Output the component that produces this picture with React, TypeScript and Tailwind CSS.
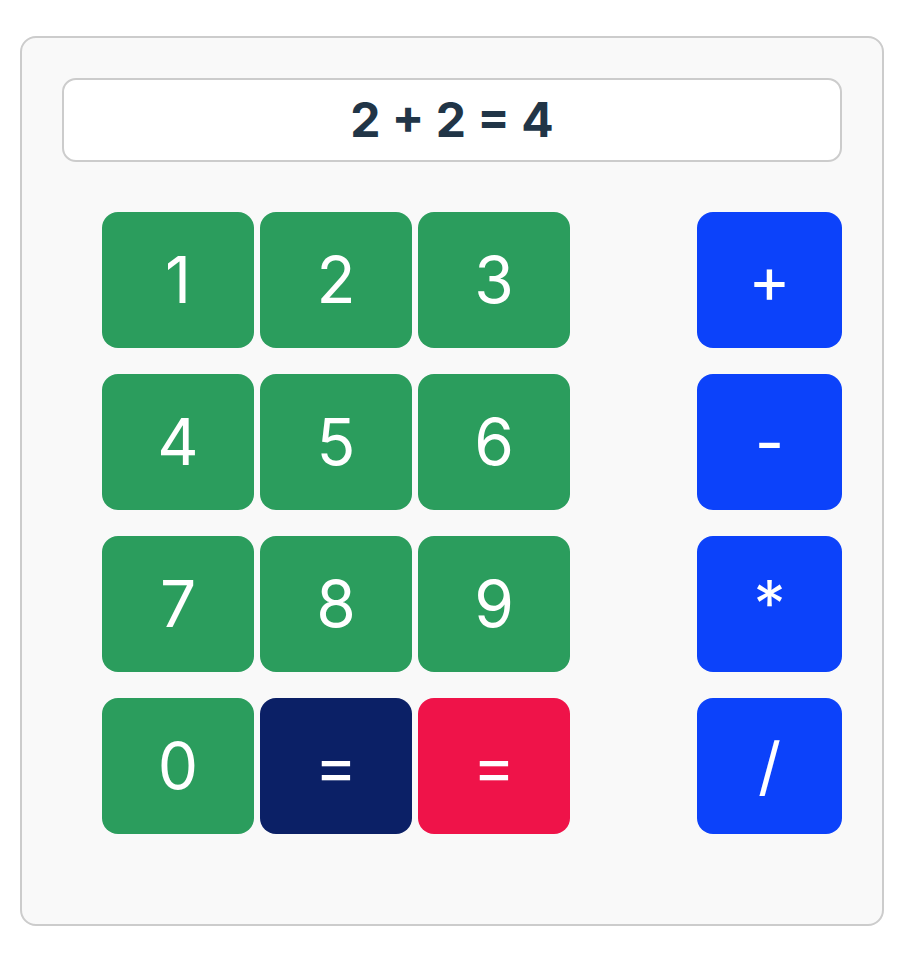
const digitRows = [
  ['1', '2', '3'],
  ['4', '5', '6'],
  ['7', '8', '9'],
];

const operators = ['+', '-', '*', '/'];

function Key({ label, color }: { label: string; color: string }) {
  return (
    <button
      className={`h-[136px] w-[152px] rounded-[16px] text-[64px] leading-none text-white ${color}`}
    >
      {label}
    </button>
  );
}

export default function App() {
  return (
    <div className="min-h-screen bg-white pl-[20px] pt-[36px] font-['Inter','Noto_Sans',sans-serif]">
      <div className="h-[890px] w-[864px] rounded-[16px] border-2 border-[#cccccc] bg-[#f9f9f9] px-[40px] pt-[40px]">
        {/* Display */}
        <div className="flex h-[84px] items-center justify-center rounded-[14px] border-2 border-[#cccccc] bg-white text-[48px] font-bold text-[#213547]">
          2 + 2 = 4
        </div>

        {/* Keypad */}
        <div className="mt-[50px] flex justify-between pl-[40px]">
          <div className="flex flex-col gap-[26px]">
            {digitRows.map((row) => (
              <div key={row.join('')} className="flex gap-[6px]">
                {row.map((d) => (
                  <Key key={d} label={d} color="bg-[#2b9d5d]" />
                ))}
              </div>
            ))}
            <div className="flex gap-[6px]">
              <Key label="0" color="bg-[#2b9d5d]" />
              <Key label="=" color="bg-[#0b2066]" />
              <Key label="=" color="bg-[#ef1349]" />
            </div>
          </div>

          <div className="flex flex-col gap-[26px]">
            {operators.map((op) => (
              <button
                key={op}
                className="h-[136px] w-[145px] rounded-[16px] bg-[#0c42fa] text-[64px] leading-none text-white"
              >
                {op}
              </button>
            ))}
          </div>
        </div>
      </div>
    </div>
  );
}
